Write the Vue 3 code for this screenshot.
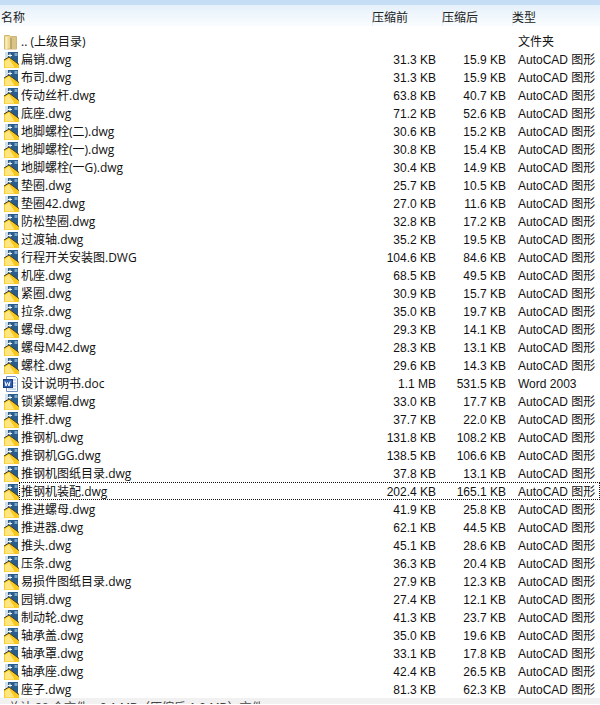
<template>
  <div class="window">
    <div class="top-strip"></div>
    <div class="header">
      <span>名称</span>
      <span>压缩前</span>
      <span>压缩后</span>
      <span>类型</span>
    </div>
    <div class="list">
      <div
        v-for="file in files"
        :key="file.name"
        class="row"
        :class="{ selected: file.name === selectedName }"
      >
        <div class="name">
          <svg v-if="file.kind === 'up'" class="icon" viewBox="0 0 16 16">
            <path d="M1.500 1.500h5l1 1h6v12.500h-12z" fill="#f0d890" stroke="#cdb678" />
            <path d="M9 3h4v12H9z" fill="#d9c486" />
            <path d="M3.500 3v12" stroke="#fbeebb" stroke-width="2" />
            <path d="M7 3l2 1v11H7z" fill="#b9a86e" />
          </svg>
          <svg v-else-if="file.kind === 'doc'" class="icon" viewBox="0 0 16 16">
            <path d="M3.500 0.500h9l2 2v13h-11z" fill="#fff" stroke="#6f8fc0" />
            <path d="M8 4h5M8 7h5M8 10h5M5 13h8" stroke="#a9bcdc" />
            <rect x="0.500" y="3.500" width="9" height="8" fill="#2f5fb0" stroke="#1c3f80" />
            <path d="M2 5.500l1 4.500 1.500-3.500 1.500 3.500 1-4.500" fill="none" stroke="#fff" />
          </svg>
          <svg v-else class="icon" viewBox="0 0 16 16">
            <path d="M2 0h13v12H2z" fill="#2a5d8c" />
            <path d="M2 0h3v7H2z" fill="#cfdfeb" />
            <path d="M7 1.500v4M5 3.500h4" stroke="#fff" />
            <path d="M11.500 1h3v3h-3z" fill="#7da7c9" />
            <path d="M1 16V8l5-3 10 7.500V16z" fill="#f8c91f" />
            <path d="M1 8l5-3 10 7.500" fill="none" stroke="#3f3a22" />
            <path d="M2 15.500V9l4-2.500 5.500 9z" fill="#ffe680" />
          </svg>
          <span class="label">{{ file.name }}</span>
        </div>
        <div class="size">{{ file.before }}</div>
        <div class="size">{{ file.after }}</div>
        <div class="type">{{ file.type }}</div>
      </div>
    </div>
    <div class="status">总计 38 个文件，3.1 MB（压缩后 1.9 MB）文件</div>
  </div>
</template>

<script setup>
const cad = "AutoCAD 图形";
const selectedName = "推钢机装配.dwg";

const files = [
  { name: ".. (上级目录)", before: "", after: "", type: "文件夹", kind: "up" },
  { name: "扁销.dwg", before: "31.3 KB", after: "15.9 KB", type: cad },
  { name: "布司.dwg", before: "31.3 KB", after: "15.9 KB", type: cad },
  { name: "传动丝杆.dwg", before: "63.8 KB", after: "40.7 KB", type: cad },
  { name: "底座.dwg", before: "71.2 KB", after: "52.6 KB", type: cad },
  { name: "地脚螺栓(二).dwg", before: "30.6 KB", after: "15.2 KB", type: cad },
  { name: "地脚螺栓(一).dwg", before: "30.8 KB", after: "15.4 KB", type: cad },
  { name: "地脚螺栓(一G).dwg", before: "30.4 KB", after: "14.9 KB", type: cad },
  { name: "垫圈.dwg", before: "25.7 KB", after: "10.5 KB", type: cad },
  { name: "垫圈42.dwg", before: "27.0 KB", after: "11.6 KB", type: cad },
  { name: "防松垫圈.dwg", before: "32.8 KB", after: "17.2 KB", type: cad },
  { name: "过渡轴.dwg", before: "35.2 KB", after: "19.5 KB", type: cad },
  { name: "行程开关安装图.DWG", before: "104.6 KB", after: "84.6 KB", type: cad },
  { name: "机座.dwg", before: "68.5 KB", after: "49.5 KB", type: cad },
  { name: "紧圈.dwg", before: "30.9 KB", after: "15.7 KB", type: cad },
  { name: "拉条.dwg", before: "35.0 KB", after: "19.7 KB", type: cad },
  { name: "螺母.dwg", before: "29.3 KB", after: "14.1 KB", type: cad },
  { name: "螺母M42.dwg", before: "28.3 KB", after: "13.1 KB", type: cad },
  { name: "螺栓.dwg", before: "29.6 KB", after: "14.3 KB", type: cad },
  { name: "设计说明书.doc", before: "1.1 MB", after: "531.5 KB", type: "Word 2003", kind: "doc" },
  { name: "锁紧螺帽.dwg", before: "33.0 KB", after: "17.7 KB", type: cad },
  { name: "推杆.dwg", before: "37.7 KB", after: "22.0 KB", type: cad },
  { name: "推钢机.dwg", before: "131.8 KB", after: "108.2 KB", type: cad },
  { name: "推钢机GG.dwg", before: "138.5 KB", after: "106.6 KB", type: cad },
  { name: "推钢机图纸目录.dwg", before: "37.8 KB", after: "13.1 KB", type: cad },
  { name: "推钢机装配.dwg", before: "202.4 KB", after: "165.1 KB", type: cad },
  { name: "推进螺母.dwg", before: "41.9 KB", after: "25.8 KB", type: cad },
  { name: "推进器.dwg", before: "62.1 KB", after: "44.5 KB", type: cad },
  { name: "推头.dwg", before: "45.1 KB", after: "28.6 KB", type: cad },
  { name: "压条.dwg", before: "36.3 KB", after: "20.4 KB", type: cad },
  { name: "易损件图纸目录.dwg", before: "27.9 KB", after: "12.3 KB", type: cad },
  { name: "园销.dwg", before: "27.4 KB", after: "12.1 KB", type: cad },
  { name: "制动轮.dwg", before: "41.3 KB", after: "23.7 KB", type: cad },
  { name: "轴承盖.dwg", before: "35.0 KB", after: "19.6 KB", type: cad },
  { name: "轴承罩.dwg", before: "33.1 KB", after: "17.8 KB", type: cad },
  { name: "轴承座.dwg", before: "42.4 KB", after: "26.5 KB", type: cad },
  { name: "座子.dwg", before: "81.3 KB", after: "62.3 KB", type: cad },
];
</script>

<style>
html,
body {
  margin: 0;
  background: #fff;
  overflow: hidden;
}
</style>

<style scoped>
.window {
  width: 600px;
  height: 705px;
  overflow: hidden;
  display: flex;
  flex-direction: column;
  background: #fff;
  color: #111;
  font-family: "Liberation Sans", "Noto Sans CJK SC", sans-serif;
  font-size: 12px;
}

.top-strip {
  height: 5px;
  flex: none;
  background: #c5def5;
}

.header {
  height: 21px;
  flex: none;
  display: grid;
  grid-template-columns: 372px 70px 70px 1fr;
  align-items: center;
  padding-top: 4px;
  box-sizing: border-box;
  background: linear-gradient(#e6f1fb, #f9fcfe);
  color: #222;
  line-height: 16px;
}

.header span {
  box-shadow: inset 1px 0 #e3edf6;
}

.header span:first-child {
  padding-left: 1px;
  box-shadow: none;
}

.list {
  flex: none;
  height: 672px;
  padding-top: 6px;
  box-sizing: border-box;
}

.row {
  position: relative;
  display: grid;
  grid-template-columns: 372px 70px 70px 1fr;
  height: 18px;
  padding-top: 1px;
  box-sizing: border-box;
  line-height: 16px;
  align-items: center;
  white-space: nowrap;
}

.row.selected::after {
  content: "";
  position: absolute;
  left: 19px;
  right: 0;
  top: 0;
  bottom: 0;
  border: 1px dotted #111;
}

.name {
  display: flex;
  align-items: center;
  gap: 2px;
  padding-left: 3px;
}

.icon {
  width: 16px;
  height: 16px;
  flex: none;
}

.label {
  font-family: "Open Sans", "Noto Sans CJK SC", sans-serif;
}

.size {
  text-align: right;
  padding-right: 6px;
}

.type {
  padding-left: 6px;
}

.status {
  flex: none;
  height: 6px;
  background: #f1f1f1;
  color: #444;
  padding-left: 8px;
  line-height: 20px;
  overflow: hidden;
  white-space: nowrap;
}
</style>
